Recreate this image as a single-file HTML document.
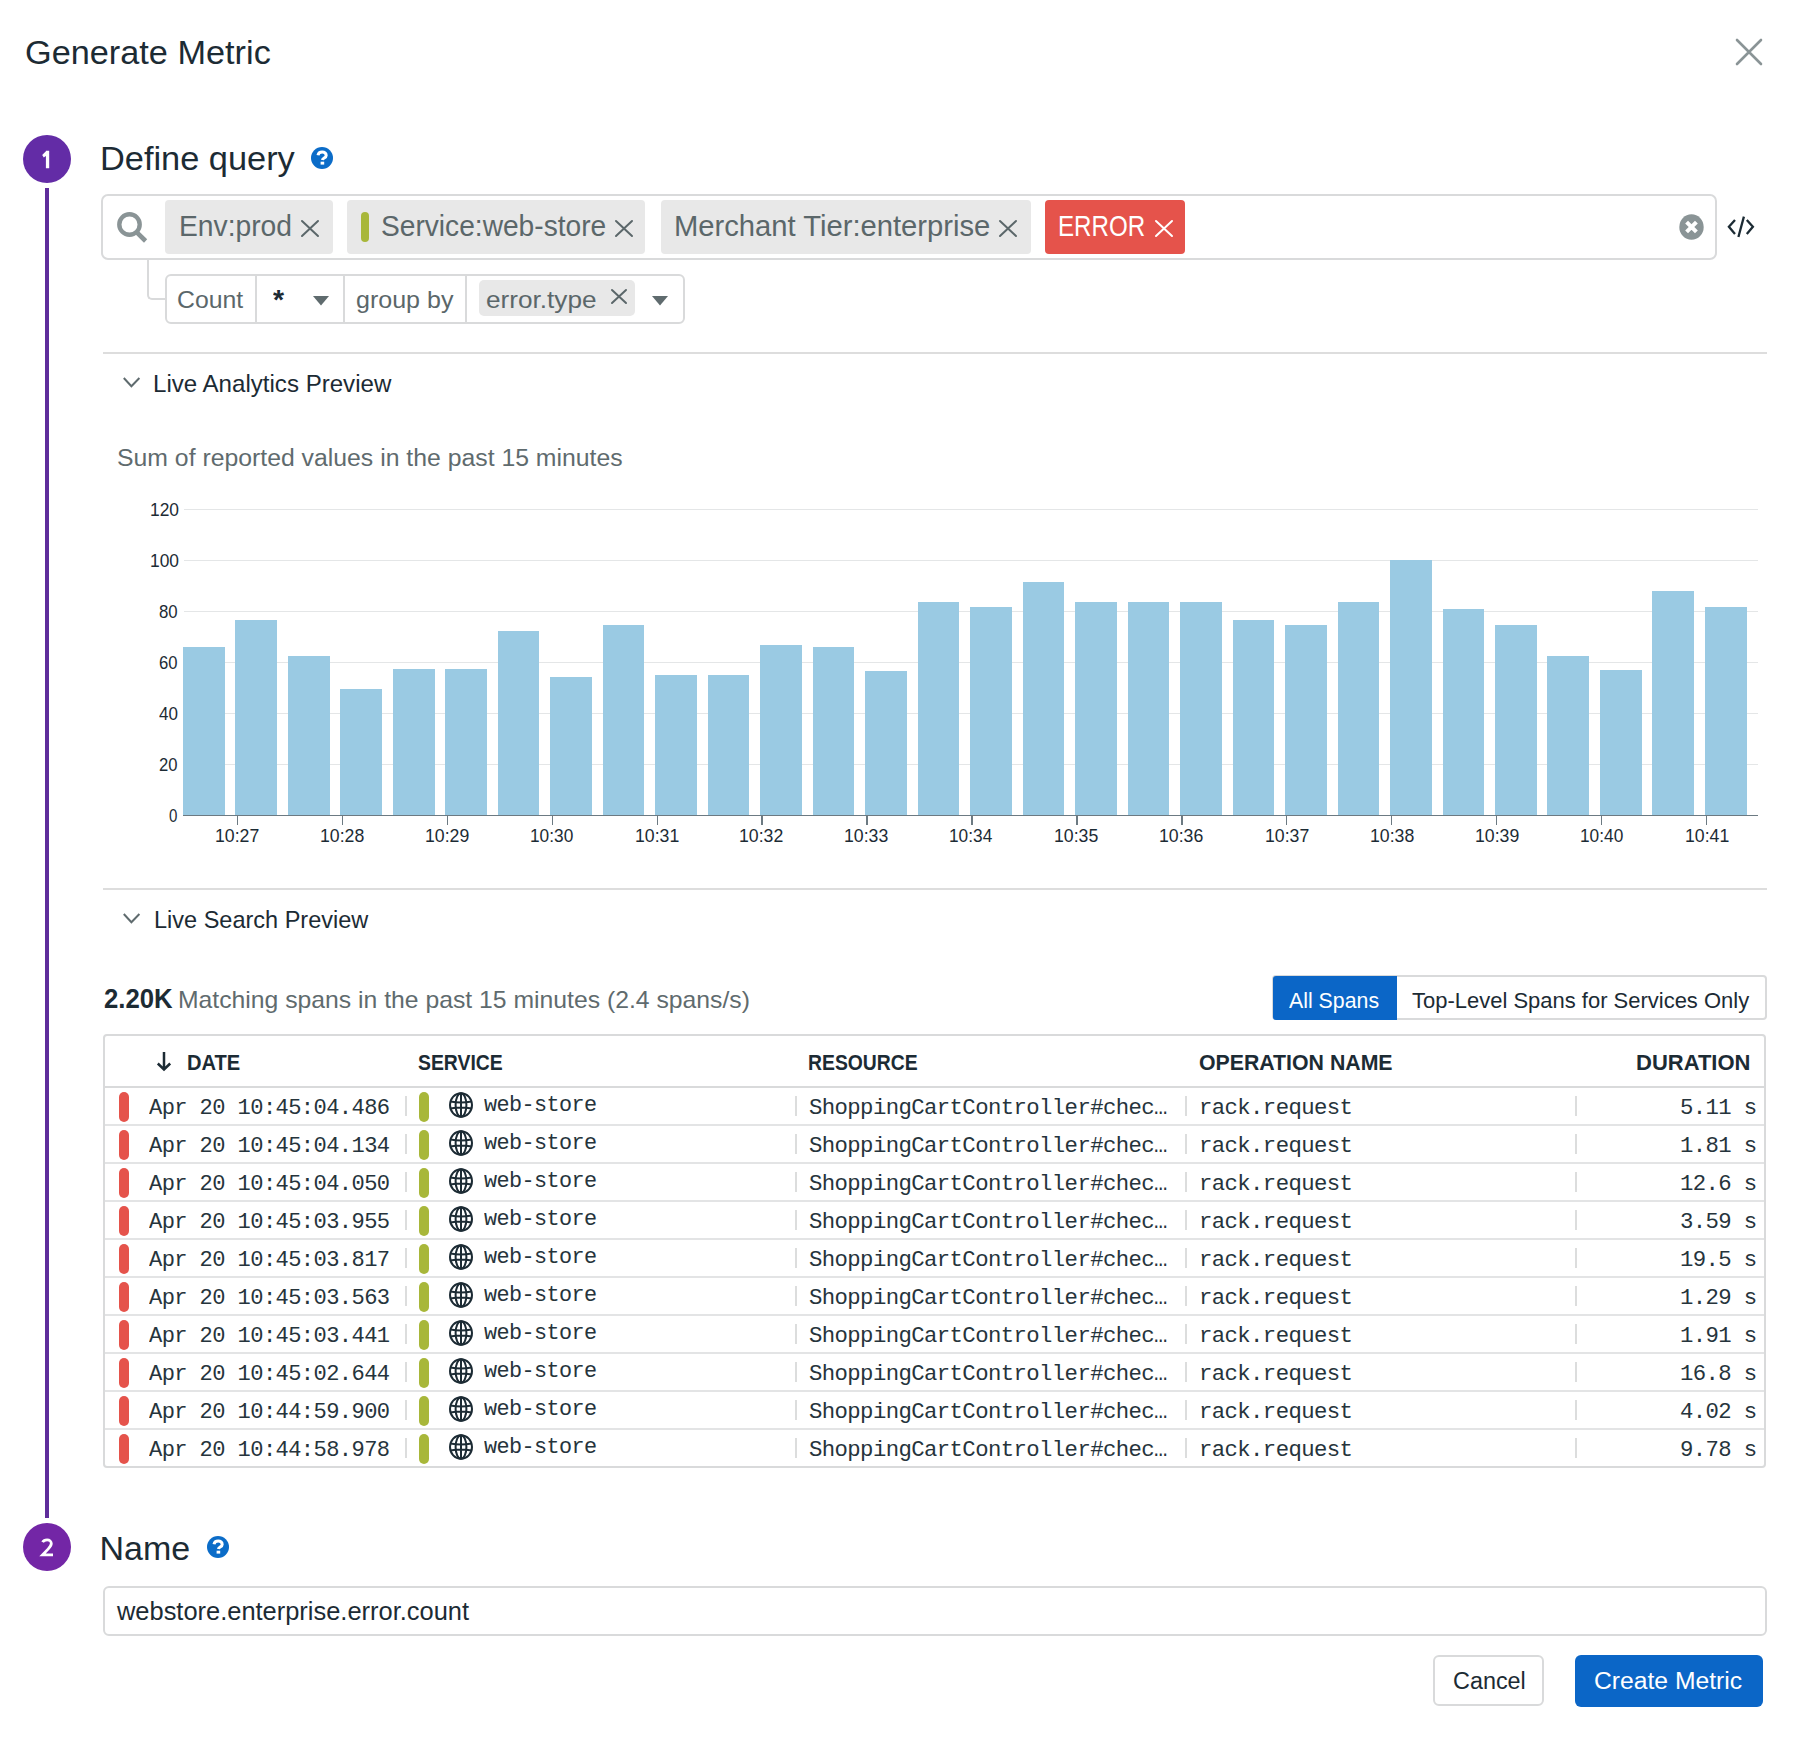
<!DOCTYPE html>
<html><head><meta charset="utf-8"><style>
html,body{margin:0;padding:0;background:#fff;}
body{width:1795px;height:1740px;position:relative;overflow:hidden;}
.a{position:absolute;}
.t{position:absolute;white-space:nowrap;line-height:1;}
.S{font-family:"Liberation Sans", sans-serif;}
.M{font-family:"Liberation Mono", monospace;}
.circ{background:#632ca6;border-radius:50%;color:#fff;font-family:"Liberation Sans", sans-serif;font-size:24px;font-weight:700;line-height:48px;text-align:center;}
svg{overflow:visible}
</style></head><body>
<div id="title" class="t S" style="left:24.80px;top:35.00px;font-size:34px;color:#1c2b34;font-weight:400;letter-spacing:0px;transform:scaleX(1.0083);transform-origin:0 0;">Generate Metric</div>
<svg class="a" style="left:1736px;top:39px" width="26" height="26" viewBox="0 0 26 26"><path d="M1 1L25 25M25 1L1 25" stroke="#8a9496" stroke-width="2.6" stroke-linecap="round" fill="none"/></svg>
<div class="a circ" style="left:23px;top:135px;width:48px;height:48px;"></div>
<svg class="a" style="left:0;top:0" width="80" height="200"><path d="M45.9 150.7H49.2V168.2H45.9Z M46.4 150.7L49.2 150.7L49.2 153.4L43.8 157.4L42.2 155.0Z" fill="#fff"/></svg>
<div class="a" style="left:45px;top:188px;width:4px;height:1330px;background:#5f2d9b"></div>
<div id="defq" class="t S" style="left:100.10px;top:141.00px;font-size:34px;color:#1c2b34;font-weight:400;letter-spacing:0px;transform:scaleX(1.0105);transform-origin:0 0;">Define query</div>
<svg class="a" style="left:310.8px;top:146.8px" width="22" height="22" viewBox="0 0 22 22"><circle cx="11" cy="11" r="11" fill="#0b6cc8"/><path d="M7.0 8.2C7.4 6.1 9.1 5.0 11.2 5.0C13.6 5.0 15.2 6.5 15.2 8.4C15.2 10.9 11.7 11.0 11.4 13.0" stroke="#fff" stroke-width="3" fill="none" stroke-linecap="butt"/><rect x="9.6" y="14.7" width="3.6" height="2.9" fill="#fff"/></svg>
<div class="a" style="left:101px;top:194px;width:1616px;height:66px;box-sizing:border-box;border:2px solid #d9dadb;border-radius:7px;background:#fff"></div>
<svg class="a" style="left:105px;top:200px" width="50" height="50" viewBox="0 0 50 50"><circle cx="24.5" cy="24.5" r="10.2" stroke="#8a9496" stroke-width="4.4" fill="none"/><path d="M31.3 31.8L40.6 41" stroke="#8a9496" stroke-width="4.6" stroke-linecap="butt"/></svg>
<div class="a" style="left:165px;top:200px;width:168px;height:54px;background:#e8e8e8;border-radius:4px"></div>
<div id="env" class="t S" style="left:179.00px;top:212.00px;font-size:29px;color:#5b676a;font-weight:400;letter-spacing:0px;transform:scaleX(0.9735);transform-origin:0 0;">Env:prod</div>
<svg class="a" style="left:301px;top:219.5px" width="18" height="17" viewBox="0 0 18 17"><path d="M1 1L17 16M17 1L1 16" stroke="#5b676a" stroke-width="2" stroke-linecap="round" fill="none"/></svg>
<div class="a" style="left:347px;top:200px;width:298px;height:54px;background:#e8e8e8;border-radius:4px"></div>
<div class="a" style="left:361px;top:212px;width:8px;height:30px;background:#a8b73a;border-radius:4px"></div>
<div id="svc" class="t S" style="left:380.50px;top:212.00px;font-size:29px;color:#5b676a;font-weight:400;letter-spacing:0px;transform:scaleX(0.9703);transform-origin:0 0;">Service:web-store</div>
<svg class="a" style="left:614.8px;top:219.5px" width="18" height="17" viewBox="0 0 18 17"><path d="M1 1L17 16M17 1L1 16" stroke="#5b676a" stroke-width="2" stroke-linecap="round" fill="none"/></svg>
<div class="a" style="left:661px;top:200px;width:370px;height:54px;background:#e8e8e8;border-radius:4px"></div>
<div id="merch" class="t S" style="left:674.00px;top:212.00px;font-size:29px;color:#5b676a;font-weight:400;letter-spacing:0px;transform:scaleX(1.0064);transform-origin:0 0;">Merchant Tier:enterprise</div>
<svg class="a" style="left:999px;top:219.5px" width="18" height="17" viewBox="0 0 18 17"><path d="M1 1L17 16M17 1L1 16" stroke="#5b676a" stroke-width="2" stroke-linecap="round" fill="none"/></svg>
<div class="a" style="left:1045px;top:200px;width:140px;height:54px;background:#e5534b;border-radius:4px"></div>
<div id="err" class="t S" style="left:1058.00px;top:212.00px;font-size:29px;color:#ffffff;font-weight:400;letter-spacing:0px;transform:scaleX(0.8317);transform-origin:0 0;">ERROR</div>
<svg class="a" style="left:1155px;top:219.5px" width="18" height="17" viewBox="0 0 18 17"><path d="M1 1L17 16M17 1L1 16" stroke="#ffffff" stroke-width="2" stroke-linecap="round" fill="none"/></svg>
<svg class="a" style="left:1678.5px;top:214px" width="25" height="26" viewBox="0 0 25 26"><ellipse cx="12.5" cy="13" rx="12.2" ry="12.8" fill="#8a9496"/><path d="M7.6 8.1L17.4 17.9M17.4 8.1L7.6 17.9" stroke="#fff" stroke-width="4.0" stroke-linecap="butt"/></svg>
<svg class="a" style="left:1720px;top:210px" width="40" height="34" viewBox="0 0 40 34"><path d="M15.0 9.9L8.9 16.8L15.0 23.9M26.8 9.9L32.9 16.8L26.8 23.9M23.9 6.6L18.4 27.0" stroke="#1c2b34" stroke-width="2.3" fill="none" stroke-linecap="butt" stroke-linejoin="miter"/></svg>
<div class="a" style="left:147px;top:259px;width:19px;height:41px;border-left:2px solid #d9dadb;border-bottom:2px solid #d9dadb;border-bottom-left-radius:5px;box-sizing:border-box"></div>
<div class="a" style="left:165px;top:274px;width:520px;height:50px;box-sizing:border-box;border:2px solid #d9dadb;border-radius:6px;background:#fff"></div>
<div class="a" style="left:255px;top:276px;width:2px;height:46px;background:#d9dadb"></div>
<div class="a" style="left:343px;top:276px;width:2px;height:46px;background:#d9dadb"></div>
<div class="a" style="left:465px;top:276px;width:2px;height:46px;background:#d9dadb"></div>
<div id="count" class="t S" style="left:177.00px;top:288.00px;font-size:24px;color:#5b676a;font-weight:400;letter-spacing:0px;transform:scaleX(1.0321);transform-origin:0 0;">Count</div>
<div id="star" class="t S" style="left:272.70px;top:286.00px;font-size:28px;color:#1c2b34;font-weight:700;letter-spacing:0px;transform:scaleX(1.0146);transform-origin:0 0;">*</div>
<svg class="a" style="left:313px;top:295.5px" width="16" height="10" viewBox="0 0 16 10"><path d="M0 0H16L8 9.5Z" fill="#5f6b6e"/></svg>
<div id="grp" class="t S" style="left:355.80px;top:288.00px;font-size:24px;color:#5b676a;font-weight:400;letter-spacing:0px;transform:scaleX(1.0431);transform-origin:0 0;">group by</div>
<div class="a" style="left:479px;top:280px;width:156px;height:36px;background:#e8e8e8;border-radius:5px"></div>
<div id="etype" class="t S" style="left:485.70px;top:288.00px;font-size:24px;color:#5b676a;font-weight:400;letter-spacing:0px;transform:scaleX(1.0901);transform-origin:0 0;">error.type</div>
<svg class="a" style="left:610.5px;top:289px" width="16" height="15" viewBox="0 0 16 15"><path d="M1 1L15 14M15 1L1 14" stroke="#5b676a" stroke-width="2" stroke-linecap="round" fill="none"/></svg>
<svg class="a" style="left:652px;top:295.5px" width="16" height="10" viewBox="0 0 16 10"><path d="M0 0H16L8 9.5Z" fill="#5f6b6e"/></svg>
<div class="a" style="left:103px;top:352px;width:1664px;height:2px;background:#dddddd"></div>
<svg class="a" style="left:123px;top:376.5px" width="18" height="11" viewBox="0 0 18 11"><path d="M0.8 1L8.4 9.2L16.4 1" stroke="#5f6b6e" stroke-width="2" fill="none"/></svg>
<div id="lap" class="t S" style="left:152.80px;top:372.00px;font-size:24.6px;color:#1c2b34;font-weight:400;letter-spacing:0px;transform:scaleX(0.9794);transform-origin:0 0;">Live Analytics Preview</div>
<div id="sum" class="t S" style="left:117.00px;top:446.00px;font-size:24.7px;color:#5f6b6e;font-weight:400;letter-spacing:0px;transform:scaleX(1.0040);transform-origin:0 0;">Sum of reported values in the past 15 minutes</div>
<div id="y0" class="t S" style="left:169.40px;top:807.00px;font-size:18.6px;color:#1c2b34;font-weight:400;letter-spacing:0px;transform:scaleX(0.8115);transform-origin:0 0;">0</div>
<div class="a" style="left:184px;top:763.8px;width:1574px;height:1.4px;background:#e4e6e7"></div>
<div id="y20" class="t S" style="left:159.40px;top:756.00px;font-size:18.6px;color:#1c2b34;font-weight:400;letter-spacing:0px;transform:scaleX(0.8933);transform-origin:0 0;">20</div>
<div class="a" style="left:184px;top:712.8px;width:1574px;height:1.4px;background:#e4e6e7"></div>
<div id="y40" class="t S" style="left:159.40px;top:705.00px;font-size:18.6px;color:#1c2b34;font-weight:400;letter-spacing:0px;transform:scaleX(0.9148);transform-origin:0 0;">40</div>
<div class="a" style="left:184px;top:661.8px;width:1574px;height:1.4px;background:#e4e6e7"></div>
<div id="y60" class="t S" style="left:159.40px;top:654.00px;font-size:18.6px;color:#1c2b34;font-weight:400;letter-spacing:0px;transform:scaleX(0.8933);transform-origin:0 0;">60</div>
<div class="a" style="left:184px;top:610.8px;width:1574px;height:1.4px;background:#e4e6e7"></div>
<div id="y80" class="t S" style="left:159.40px;top:603.00px;font-size:18.6px;color:#1c2b34;font-weight:400;letter-spacing:0px;transform:scaleX(0.9027);transform-origin:0 0;">80</div>
<div class="a" style="left:184px;top:559.8px;width:1574px;height:1.4px;background:#e4e6e7"></div>
<div id="y100" class="t S" style="left:149.50px;top:552.00px;font-size:18.6px;color:#1c2b34;font-weight:400;letter-spacing:0px;transform:scaleX(0.9348);transform-origin:0 0;">100</div>
<div class="a" style="left:184px;top:508.8px;width:1574px;height:1.4px;background:#e4e6e7"></div>
<div id="y120" class="t S" style="left:149.50px;top:501.00px;font-size:18.6px;color:#1c2b34;font-weight:400;letter-spacing:0px;transform:scaleX(0.9348);transform-origin:0 0;">120</div>
<div class="a" style="left:183.00px;top:647.0px;width:41.6px;height:168.0px;background:#9acae3"></div>
<div class="a" style="left:235.48px;top:619.8px;width:41.6px;height:195.2px;background:#9acae3"></div>
<div class="a" style="left:287.96px;top:655.9px;width:41.6px;height:159.1px;background:#9acae3"></div>
<div class="a" style="left:340.44px;top:689.1px;width:41.6px;height:125.9px;background:#9acae3"></div>
<div class="a" style="left:392.92px;top:669.2px;width:41.6px;height:145.8px;background:#9acae3"></div>
<div class="a" style="left:445.40px;top:669.2px;width:41.6px;height:145.8px;background:#9acae3"></div>
<div class="a" style="left:497.88px;top:630.7px;width:41.6px;height:184.3px;background:#9acae3"></div>
<div class="a" style="left:550.36px;top:676.6px;width:41.6px;height:138.4px;background:#9acae3"></div>
<div class="a" style="left:602.84px;top:625.1px;width:41.6px;height:189.9px;background:#9acae3"></div>
<div class="a" style="left:655.32px;top:674.8px;width:41.6px;height:140.2px;background:#9acae3"></div>
<div class="a" style="left:707.80px;top:674.8px;width:41.6px;height:140.2px;background:#9acae3"></div>
<div class="a" style="left:760.28px;top:645.0px;width:41.6px;height:170.0px;background:#9acae3"></div>
<div class="a" style="left:812.76px;top:647.0px;width:41.6px;height:168.0px;background:#9acae3"></div>
<div class="a" style="left:865.24px;top:671.3px;width:41.6px;height:143.7px;background:#9acae3"></div>
<div class="a" style="left:917.72px;top:602.0px;width:41.6px;height:213.0px;background:#9acae3"></div>
<div class="a" style="left:970.20px;top:607.1px;width:41.6px;height:207.9px;background:#9acae3"></div>
<div class="a" style="left:1022.68px;top:581.9px;width:41.6px;height:233.1px;background:#9acae3"></div>
<div class="a" style="left:1075.16px;top:602.0px;width:41.6px;height:213.0px;background:#9acae3"></div>
<div class="a" style="left:1127.64px;top:602.0px;width:41.6px;height:213.0px;background:#9acae3"></div>
<div class="a" style="left:1180.12px;top:602.0px;width:41.6px;height:213.0px;background:#9acae3"></div>
<div class="a" style="left:1232.60px;top:619.8px;width:41.6px;height:195.2px;background:#9acae3"></div>
<div class="a" style="left:1285.08px;top:625.1px;width:41.6px;height:189.9px;background:#9acae3"></div>
<div class="a" style="left:1337.56px;top:602.0px;width:41.6px;height:213.0px;background:#9acae3"></div>
<div class="a" style="left:1390.04px;top:560.3px;width:41.6px;height:254.7px;background:#9acae3"></div>
<div class="a" style="left:1442.52px;top:609.1px;width:41.6px;height:205.9px;background:#9acae3"></div>
<div class="a" style="left:1495.00px;top:625.4px;width:41.6px;height:189.6px;background:#9acae3"></div>
<div class="a" style="left:1547.48px;top:656.0px;width:41.6px;height:159.0px;background:#9acae3"></div>
<div class="a" style="left:1599.96px;top:669.5px;width:41.6px;height:145.5px;background:#9acae3"></div>
<div class="a" style="left:1652.44px;top:591.2px;width:41.6px;height:223.8px;background:#9acae3"></div>
<div class="a" style="left:1704.92px;top:607.2px;width:41.6px;height:207.8px;background:#9acae3"></div>
<div class="a" style="left:183px;top:814.5px;width:1575px;height:1.3px;background:#6c7a82"></div>
<div class="a" style="left:236.8px;top:815px;width:1.5px;height:9.5px;background:#6c7a82"></div>
<div id="x0" class="t S" style="left:215.40px;top:827.00px;font-size:18.5px;color:#1c2b34;font-weight:400;letter-spacing:0px;transform:scaleX(0.9562);transform-origin:0 0;">10:27</div>
<div class="a" style="left:341.8px;top:815px;width:1.5px;height:9.5px;background:#6c7a82"></div>
<div id="x1" class="t S" style="left:320.41px;top:827.00px;font-size:18.5px;color:#1c2b34;font-weight:400;letter-spacing:0px;transform:scaleX(0.9562);transform-origin:0 0;">10:28</div>
<div class="a" style="left:446.7px;top:815px;width:1.5px;height:9.5px;background:#6c7a82"></div>
<div id="x2" class="t S" style="left:425.42px;top:827.00px;font-size:18.5px;color:#1c2b34;font-weight:400;letter-spacing:0px;transform:scaleX(0.9562);transform-origin:0 0;">10:29</div>
<div class="a" style="left:551.6px;top:815px;width:1.5px;height:9.5px;background:#6c7a82"></div>
<div id="x3" class="t S" style="left:530.43px;top:827.00px;font-size:18.5px;color:#1c2b34;font-weight:400;letter-spacing:0px;transform:scaleX(0.9340);transform-origin:0 0;">10:30</div>
<div class="a" style="left:656.5px;top:815px;width:1.5px;height:9.5px;background:#6c7a82"></div>
<div id="x4" class="t S" style="left:635.44px;top:827.00px;font-size:18.5px;color:#1c2b34;font-weight:400;letter-spacing:0px;transform:scaleX(0.9562);transform-origin:0 0;">10:31</div>
<div class="a" style="left:761.4px;top:815px;width:1.5px;height:9.5px;background:#6c7a82"></div>
<div id="x5" class="t S" style="left:739.45px;top:827.00px;font-size:18.5px;color:#1c2b34;font-weight:400;letter-spacing:0px;transform:scaleX(0.9562);transform-origin:0 0;">10:32</div>
<div class="a" style="left:866.3px;top:815px;width:1.5px;height:9.5px;background:#6c7a82"></div>
<div id="x6" class="t S" style="left:844.46px;top:827.00px;font-size:18.5px;color:#1c2b34;font-weight:400;letter-spacing:0px;transform:scaleX(0.9562);transform-origin:0 0;">10:33</div>
<div class="a" style="left:971.2px;top:815px;width:1.5px;height:9.5px;background:#6c7a82"></div>
<div id="x7" class="t S" style="left:949.47px;top:827.00px;font-size:18.5px;color:#1c2b34;font-weight:400;letter-spacing:0px;transform:scaleX(0.9340);transform-origin:0 0;">10:34</div>
<div class="a" style="left:1076.1px;top:815px;width:1.5px;height:9.5px;background:#6c7a82"></div>
<div id="x8" class="t S" style="left:1054.48px;top:827.00px;font-size:18.5px;color:#1c2b34;font-weight:400;letter-spacing:0px;transform:scaleX(0.9562);transform-origin:0 0;">10:35</div>
<div class="a" style="left:1181.0px;top:815px;width:1.5px;height:9.5px;background:#6c7a82"></div>
<div id="x9" class="t S" style="left:1159.49px;top:827.00px;font-size:18.5px;color:#1c2b34;font-weight:400;letter-spacing:0px;transform:scaleX(0.9562);transform-origin:0 0;">10:36</div>
<div class="a" style="left:1285.9px;top:815px;width:1.5px;height:9.5px;background:#6c7a82"></div>
<div id="x10" class="t S" style="left:1264.50px;top:827.00px;font-size:18.5px;color:#1c2b34;font-weight:400;letter-spacing:0px;transform:scaleX(0.9562);transform-origin:0 0;">10:37</div>
<div class="a" style="left:1390.9px;top:815px;width:1.5px;height:9.5px;background:#6c7a82"></div>
<div id="x11" class="t S" style="left:1369.51px;top:827.00px;font-size:18.5px;color:#1c2b34;font-weight:400;letter-spacing:0px;transform:scaleX(0.9562);transform-origin:0 0;">10:38</div>
<div class="a" style="left:1495.8px;top:815px;width:1.5px;height:9.5px;background:#6c7a82"></div>
<div id="x12" class="t S" style="left:1474.52px;top:827.00px;font-size:18.5px;color:#1c2b34;font-weight:400;letter-spacing:0px;transform:scaleX(0.9562);transform-origin:0 0;">10:39</div>
<div class="a" style="left:1600.7px;top:815px;width:1.5px;height:9.5px;background:#6c7a82"></div>
<div id="x13" class="t S" style="left:1579.53px;top:827.00px;font-size:18.5px;color:#1c2b34;font-weight:400;letter-spacing:0px;transform:scaleX(0.9340);transform-origin:0 0;">10:40</div>
<div class="a" style="left:1705.6px;top:815px;width:1.5px;height:9.5px;background:#6c7a82"></div>
<div id="x14" class="t S" style="left:1684.54px;top:827.00px;font-size:18.5px;color:#1c2b34;font-weight:400;letter-spacing:0px;transform:scaleX(0.9562);transform-origin:0 0;">10:41</div>
<div class="a" style="left:103px;top:888px;width:1664px;height:2px;background:#dddddd"></div>
<svg class="a" style="left:123px;top:912.5px" width="18" height="11" viewBox="0 0 18 11"><path d="M0.8 1L8.4 9.2L16.4 1" stroke="#5f6b6e" stroke-width="2" fill="none"/></svg>
<div id="lsp" class="t S" style="left:153.80px;top:908.00px;font-size:24.4px;color:#1c2b34;font-weight:400;letter-spacing:0px;transform:scaleX(0.9638);transform-origin:0 0;">Live Search Preview</div>
<div id="k" class="t S" style="left:103.80px;top:985.00px;font-size:28px;color:#1c2b34;font-weight:700;letter-spacing:0px;transform:scaleX(0.9192);transform-origin:0 0;">2.20K</div>
<div id="match" class="t S" style="left:178.20px;top:988.00px;font-size:24px;color:#5f6b6e;font-weight:400;letter-spacing:0px;transform:scaleX(1.0306);transform-origin:0 0;">Matching spans in the past 15 minutes (2.4 spans/s)</div>
<div class="a" style="left:1272px;top:975px;width:495px;height:45px;box-sizing:border-box;border:2px solid #d9dadb;border-radius:4px;background:#fff"></div>
<div class="a" style="left:1273px;top:976px;width:124px;height:43.5px;background:#0b66c7;border-radius:3px 0 0 3px"></div>
<div id="all" class="t S" style="left:1289.20px;top:990.00px;font-size:22.5px;color:#ffffff;font-weight:400;letter-spacing:0px;transform:scaleX(0.9474);transform-origin:0 0;">All Spans</div>
<div id="top" class="t S" style="left:1412.10px;top:990.00px;font-size:22.5px;color:#1c2b34;font-weight:400;letter-spacing:0px;transform:scaleX(0.9768);transform-origin:0 0;">Top-Level Spans for Services Only</div>
<div class="a" style="left:103px;top:1034px;width:1663px;height:434px;box-sizing:border-box;border:2px solid #d9dadb;border-radius:4px;background:#fff"></div>
<div class="a" style="left:105px;top:1086px;width:1659px;height:2px;background:#d9dadb"></div>
<svg class="a" style="left:156px;top:1051px" width="16" height="20" viewBox="0 0 16 20"><path d="M8 1V18.5M1.8 12.5L8 18.5L14.2 12.5" stroke="#1c2b34" stroke-width="2.5" fill="none"/></svg>
<div id="h_date" class="t S" style="left:186.60px;top:1052.00px;font-size:22.4px;color:#1c2b34;font-weight:700;letter-spacing:0px;transform:scaleX(0.8970);transform-origin:0 0;">DATE</div>
<div id="h_svc" class="t S" style="left:417.50px;top:1052.00px;font-size:22.4px;color:#1c2b34;font-weight:700;letter-spacing:0px;transform:scaleX(0.8661);transform-origin:0 0;">SERVICE</div>
<div id="h_res" class="t S" style="left:807.50px;top:1052.00px;font-size:22.4px;color:#1c2b34;font-weight:700;letter-spacing:0px;transform:scaleX(0.8641);transform-origin:0 0;">RESOURCE</div>
<div id="h_op" class="t S" style="left:1198.50px;top:1052.00px;font-size:22.4px;color:#1c2b34;font-weight:700;letter-spacing:0px;transform:scaleX(0.9507);transform-origin:0 0;">OPERATION NAME</div>
<div id="h_dur" class="t S" style="left:1635.90px;top:1052.00px;font-size:22.4px;color:#1c2b34;font-weight:700;letter-spacing:0px;transform:scaleX(0.9826);transform-origin:0 0;">DURATION</div>
<div class="a" style="left:105px;top:1124px;width:1659px;height:2px;background:#e3e4e5"></div>
<div class="a" style="left:119px;top:1092px;width:10px;height:30px;background:#e5534b;border-radius:5px"></div>
<div id="r0d" class="t M" style="left:149.00px;top:1098.00px;font-size:22px;color:#26343c;font-weight:400;letter-spacing:-0.6px;transform:scaleX(1.0042);transform-origin:0 0;">Apr 20 10:45:04.486</div>
<div class="a" style="left:405px;top:1096px;width:1.5px;height:20px;background:#dcdddd"></div>
<div class="a" style="left:419px;top:1092px;width:10px;height:29.5px;background:#a8b73a;border-radius:5px"></div>
<svg class="a" style="left:448px;top:1092px" width="26" height="26" viewBox="0 0 26 26"><g stroke="#1c2b34" stroke-width="2" fill="none"><ellipse cx="13" cy="13" rx="11" ry="11.8"/><ellipse cx="13" cy="13" rx="5.4" ry="11.8"/><path d="M13 1.2V24.8M2.5 9.6Q13 11.6 23.5 9.6M2.5 16.6Q13 14.6 23.5 16.6"/></g></svg>
<div id="r0s" class="t M" style="left:483.60px;top:1095.00px;font-size:22px;color:#26343c;font-weight:400;letter-spacing:-0.6px;transform:scaleX(0.9913);transform-origin:0 0;">web-store</div>
<div class="a" style="left:795px;top:1096px;width:1.5px;height:20px;background:#dcdddd"></div>
<div id="r0r" class="t M" style="left:809.40px;top:1098.00px;font-size:22px;color:#26343c;font-weight:400;letter-spacing:-0.6px;transform:scaleX(1.0142);transform-origin:0 0;">ShoppingCartController#chec…</div>
<div class="a" style="left:1185px;top:1096px;width:1.5px;height:20px;background:#dcdddd"></div>
<div id="r0o" class="t M" style="left:1199.00px;top:1098.00px;font-size:22px;color:#26343c;font-weight:400;letter-spacing:-0.6px;transform:scaleX(1.0135);transform-origin:0 0;">rack.request</div>
<div class="a" style="left:1575px;top:1096px;width:1.5px;height:20px;background:#dcdddd"></div>
<div id="r0u" class="t M" style="left:1679.70px;top:1098.00px;font-size:22px;color:#26343c;font-weight:400;letter-spacing:-0.6px;transform:scaleX(1.0137);transform-origin:0 0;">5.11 s</div>
<div class="a" style="left:105px;top:1162px;width:1659px;height:2px;background:#e3e4e5"></div>
<div class="a" style="left:119px;top:1130px;width:10px;height:30px;background:#e5534b;border-radius:5px"></div>
<div id="r1d" class="t M" style="left:149.00px;top:1136.00px;font-size:22px;color:#26343c;font-weight:400;letter-spacing:-0.6px;transform:scaleX(1.0042);transform-origin:0 0;">Apr 20 10:45:04.134</div>
<div class="a" style="left:405px;top:1134px;width:1.5px;height:20px;background:#dcdddd"></div>
<div class="a" style="left:419px;top:1130px;width:10px;height:29.5px;background:#a8b73a;border-radius:5px"></div>
<svg class="a" style="left:448px;top:1130px" width="26" height="26" viewBox="0 0 26 26"><g stroke="#1c2b34" stroke-width="2" fill="none"><ellipse cx="13" cy="13" rx="11" ry="11.8"/><ellipse cx="13" cy="13" rx="5.4" ry="11.8"/><path d="M13 1.2V24.8M2.5 9.6Q13 11.6 23.5 9.6M2.5 16.6Q13 14.6 23.5 16.6"/></g></svg>
<div id="r1s" class="t M" style="left:483.60px;top:1133.00px;font-size:22px;color:#26343c;font-weight:400;letter-spacing:-0.6px;transform:scaleX(0.9913);transform-origin:0 0;">web-store</div>
<div class="a" style="left:795px;top:1134px;width:1.5px;height:20px;background:#dcdddd"></div>
<div id="r1r" class="t M" style="left:809.40px;top:1136.00px;font-size:22px;color:#26343c;font-weight:400;letter-spacing:-0.6px;transform:scaleX(1.0142);transform-origin:0 0;">ShoppingCartController#chec…</div>
<div class="a" style="left:1185px;top:1134px;width:1.5px;height:20px;background:#dcdddd"></div>
<div id="r1o" class="t M" style="left:1199.00px;top:1136.00px;font-size:22px;color:#26343c;font-weight:400;letter-spacing:-0.6px;transform:scaleX(1.0135);transform-origin:0 0;">rack.request</div>
<div class="a" style="left:1575px;top:1134px;width:1.5px;height:20px;background:#dcdddd"></div>
<div id="r1u" class="t M" style="left:1679.70px;top:1136.00px;font-size:22px;color:#26343c;font-weight:400;letter-spacing:-0.6px;transform:scaleX(1.0137);transform-origin:0 0;">1.81 s</div>
<div class="a" style="left:105px;top:1200px;width:1659px;height:2px;background:#e3e4e5"></div>
<div class="a" style="left:119px;top:1168px;width:10px;height:30px;background:#e5534b;border-radius:5px"></div>
<div id="r2d" class="t M" style="left:149.00px;top:1174.00px;font-size:22px;color:#26343c;font-weight:400;letter-spacing:-0.6px;transform:scaleX(1.0042);transform-origin:0 0;">Apr 20 10:45:04.050</div>
<div class="a" style="left:405px;top:1172px;width:1.5px;height:20px;background:#dcdddd"></div>
<div class="a" style="left:419px;top:1168px;width:10px;height:29.5px;background:#a8b73a;border-radius:5px"></div>
<svg class="a" style="left:448px;top:1168px" width="26" height="26" viewBox="0 0 26 26"><g stroke="#1c2b34" stroke-width="2" fill="none"><ellipse cx="13" cy="13" rx="11" ry="11.8"/><ellipse cx="13" cy="13" rx="5.4" ry="11.8"/><path d="M13 1.2V24.8M2.5 9.6Q13 11.6 23.5 9.6M2.5 16.6Q13 14.6 23.5 16.6"/></g></svg>
<div id="r2s" class="t M" style="left:483.60px;top:1171.00px;font-size:22px;color:#26343c;font-weight:400;letter-spacing:-0.6px;transform:scaleX(0.9913);transform-origin:0 0;">web-store</div>
<div class="a" style="left:795px;top:1172px;width:1.5px;height:20px;background:#dcdddd"></div>
<div id="r2r" class="t M" style="left:809.40px;top:1174.00px;font-size:22px;color:#26343c;font-weight:400;letter-spacing:-0.6px;transform:scaleX(1.0142);transform-origin:0 0;">ShoppingCartController#chec…</div>
<div class="a" style="left:1185px;top:1172px;width:1.5px;height:20px;background:#dcdddd"></div>
<div id="r2o" class="t M" style="left:1199.00px;top:1174.00px;font-size:22px;color:#26343c;font-weight:400;letter-spacing:-0.6px;transform:scaleX(1.0135);transform-origin:0 0;">rack.request</div>
<div class="a" style="left:1575px;top:1172px;width:1.5px;height:20px;background:#dcdddd"></div>
<div id="r2u" class="t M" style="left:1679.70px;top:1174.00px;font-size:22px;color:#26343c;font-weight:400;letter-spacing:-0.6px;transform:scaleX(1.0137);transform-origin:0 0;">12.6 s</div>
<div class="a" style="left:105px;top:1238px;width:1659px;height:2px;background:#e3e4e5"></div>
<div class="a" style="left:119px;top:1206px;width:10px;height:30px;background:#e5534b;border-radius:5px"></div>
<div id="r3d" class="t M" style="left:149.00px;top:1212.00px;font-size:22px;color:#26343c;font-weight:400;letter-spacing:-0.6px;transform:scaleX(1.0042);transform-origin:0 0;">Apr 20 10:45:03.955</div>
<div class="a" style="left:405px;top:1210px;width:1.5px;height:20px;background:#dcdddd"></div>
<div class="a" style="left:419px;top:1206px;width:10px;height:29.5px;background:#a8b73a;border-radius:5px"></div>
<svg class="a" style="left:448px;top:1206px" width="26" height="26" viewBox="0 0 26 26"><g stroke="#1c2b34" stroke-width="2" fill="none"><ellipse cx="13" cy="13" rx="11" ry="11.8"/><ellipse cx="13" cy="13" rx="5.4" ry="11.8"/><path d="M13 1.2V24.8M2.5 9.6Q13 11.6 23.5 9.6M2.5 16.6Q13 14.6 23.5 16.6"/></g></svg>
<div id="r3s" class="t M" style="left:483.60px;top:1209.00px;font-size:22px;color:#26343c;font-weight:400;letter-spacing:-0.6px;transform:scaleX(0.9913);transform-origin:0 0;">web-store</div>
<div class="a" style="left:795px;top:1210px;width:1.5px;height:20px;background:#dcdddd"></div>
<div id="r3r" class="t M" style="left:809.40px;top:1212.00px;font-size:22px;color:#26343c;font-weight:400;letter-spacing:-0.6px;transform:scaleX(1.0142);transform-origin:0 0;">ShoppingCartController#chec…</div>
<div class="a" style="left:1185px;top:1210px;width:1.5px;height:20px;background:#dcdddd"></div>
<div id="r3o" class="t M" style="left:1199.00px;top:1212.00px;font-size:22px;color:#26343c;font-weight:400;letter-spacing:-0.6px;transform:scaleX(1.0135);transform-origin:0 0;">rack.request</div>
<div class="a" style="left:1575px;top:1210px;width:1.5px;height:20px;background:#dcdddd"></div>
<div id="r3u" class="t M" style="left:1679.70px;top:1212.00px;font-size:22px;color:#26343c;font-weight:400;letter-spacing:-0.6px;transform:scaleX(1.0137);transform-origin:0 0;">3.59 s</div>
<div class="a" style="left:105px;top:1276px;width:1659px;height:2px;background:#e3e4e5"></div>
<div class="a" style="left:119px;top:1244px;width:10px;height:30px;background:#e5534b;border-radius:5px"></div>
<div id="r4d" class="t M" style="left:149.00px;top:1250.00px;font-size:22px;color:#26343c;font-weight:400;letter-spacing:-0.6px;transform:scaleX(1.0042);transform-origin:0 0;">Apr 20 10:45:03.817</div>
<div class="a" style="left:405px;top:1248px;width:1.5px;height:20px;background:#dcdddd"></div>
<div class="a" style="left:419px;top:1244px;width:10px;height:29.5px;background:#a8b73a;border-radius:5px"></div>
<svg class="a" style="left:448px;top:1244px" width="26" height="26" viewBox="0 0 26 26"><g stroke="#1c2b34" stroke-width="2" fill="none"><ellipse cx="13" cy="13" rx="11" ry="11.8"/><ellipse cx="13" cy="13" rx="5.4" ry="11.8"/><path d="M13 1.2V24.8M2.5 9.6Q13 11.6 23.5 9.6M2.5 16.6Q13 14.6 23.5 16.6"/></g></svg>
<div id="r4s" class="t M" style="left:483.60px;top:1247.00px;font-size:22px;color:#26343c;font-weight:400;letter-spacing:-0.6px;transform:scaleX(0.9913);transform-origin:0 0;">web-store</div>
<div class="a" style="left:795px;top:1248px;width:1.5px;height:20px;background:#dcdddd"></div>
<div id="r4r" class="t M" style="left:809.40px;top:1250.00px;font-size:22px;color:#26343c;font-weight:400;letter-spacing:-0.6px;transform:scaleX(1.0142);transform-origin:0 0;">ShoppingCartController#chec…</div>
<div class="a" style="left:1185px;top:1248px;width:1.5px;height:20px;background:#dcdddd"></div>
<div id="r4o" class="t M" style="left:1199.00px;top:1250.00px;font-size:22px;color:#26343c;font-weight:400;letter-spacing:-0.6px;transform:scaleX(1.0135);transform-origin:0 0;">rack.request</div>
<div class="a" style="left:1575px;top:1248px;width:1.5px;height:20px;background:#dcdddd"></div>
<div id="r4u" class="t M" style="left:1679.70px;top:1250.00px;font-size:22px;color:#26343c;font-weight:400;letter-spacing:-0.6px;transform:scaleX(1.0137);transform-origin:0 0;">19.5 s</div>
<div class="a" style="left:105px;top:1314px;width:1659px;height:2px;background:#e3e4e5"></div>
<div class="a" style="left:119px;top:1282px;width:10px;height:30px;background:#e5534b;border-radius:5px"></div>
<div id="r5d" class="t M" style="left:149.00px;top:1288.00px;font-size:22px;color:#26343c;font-weight:400;letter-spacing:-0.6px;transform:scaleX(1.0042);transform-origin:0 0;">Apr 20 10:45:03.563</div>
<div class="a" style="left:405px;top:1286px;width:1.5px;height:20px;background:#dcdddd"></div>
<div class="a" style="left:419px;top:1282px;width:10px;height:29.5px;background:#a8b73a;border-radius:5px"></div>
<svg class="a" style="left:448px;top:1282px" width="26" height="26" viewBox="0 0 26 26"><g stroke="#1c2b34" stroke-width="2" fill="none"><ellipse cx="13" cy="13" rx="11" ry="11.8"/><ellipse cx="13" cy="13" rx="5.4" ry="11.8"/><path d="M13 1.2V24.8M2.5 9.6Q13 11.6 23.5 9.6M2.5 16.6Q13 14.6 23.5 16.6"/></g></svg>
<div id="r5s" class="t M" style="left:483.60px;top:1285.00px;font-size:22px;color:#26343c;font-weight:400;letter-spacing:-0.6px;transform:scaleX(0.9913);transform-origin:0 0;">web-store</div>
<div class="a" style="left:795px;top:1286px;width:1.5px;height:20px;background:#dcdddd"></div>
<div id="r5r" class="t M" style="left:809.40px;top:1288.00px;font-size:22px;color:#26343c;font-weight:400;letter-spacing:-0.6px;transform:scaleX(1.0142);transform-origin:0 0;">ShoppingCartController#chec…</div>
<div class="a" style="left:1185px;top:1286px;width:1.5px;height:20px;background:#dcdddd"></div>
<div id="r5o" class="t M" style="left:1199.00px;top:1288.00px;font-size:22px;color:#26343c;font-weight:400;letter-spacing:-0.6px;transform:scaleX(1.0135);transform-origin:0 0;">rack.request</div>
<div class="a" style="left:1575px;top:1286px;width:1.5px;height:20px;background:#dcdddd"></div>
<div id="r5u" class="t M" style="left:1679.70px;top:1288.00px;font-size:22px;color:#26343c;font-weight:400;letter-spacing:-0.6px;transform:scaleX(1.0137);transform-origin:0 0;">1.29 s</div>
<div class="a" style="left:105px;top:1352px;width:1659px;height:2px;background:#e3e4e5"></div>
<div class="a" style="left:119px;top:1320px;width:10px;height:30px;background:#e5534b;border-radius:5px"></div>
<div id="r6d" class="t M" style="left:149.00px;top:1326.00px;font-size:22px;color:#26343c;font-weight:400;letter-spacing:-0.6px;transform:scaleX(1.0042);transform-origin:0 0;">Apr 20 10:45:03.441</div>
<div class="a" style="left:405px;top:1324px;width:1.5px;height:20px;background:#dcdddd"></div>
<div class="a" style="left:419px;top:1320px;width:10px;height:29.5px;background:#a8b73a;border-radius:5px"></div>
<svg class="a" style="left:448px;top:1320px" width="26" height="26" viewBox="0 0 26 26"><g stroke="#1c2b34" stroke-width="2" fill="none"><ellipse cx="13" cy="13" rx="11" ry="11.8"/><ellipse cx="13" cy="13" rx="5.4" ry="11.8"/><path d="M13 1.2V24.8M2.5 9.6Q13 11.6 23.5 9.6M2.5 16.6Q13 14.6 23.5 16.6"/></g></svg>
<div id="r6s" class="t M" style="left:483.60px;top:1323.00px;font-size:22px;color:#26343c;font-weight:400;letter-spacing:-0.6px;transform:scaleX(0.9913);transform-origin:0 0;">web-store</div>
<div class="a" style="left:795px;top:1324px;width:1.5px;height:20px;background:#dcdddd"></div>
<div id="r6r" class="t M" style="left:809.40px;top:1326.00px;font-size:22px;color:#26343c;font-weight:400;letter-spacing:-0.6px;transform:scaleX(1.0142);transform-origin:0 0;">ShoppingCartController#chec…</div>
<div class="a" style="left:1185px;top:1324px;width:1.5px;height:20px;background:#dcdddd"></div>
<div id="r6o" class="t M" style="left:1199.00px;top:1326.00px;font-size:22px;color:#26343c;font-weight:400;letter-spacing:-0.6px;transform:scaleX(1.0135);transform-origin:0 0;">rack.request</div>
<div class="a" style="left:1575px;top:1324px;width:1.5px;height:20px;background:#dcdddd"></div>
<div id="r6u" class="t M" style="left:1679.70px;top:1326.00px;font-size:22px;color:#26343c;font-weight:400;letter-spacing:-0.6px;transform:scaleX(1.0137);transform-origin:0 0;">1.91 s</div>
<div class="a" style="left:105px;top:1390px;width:1659px;height:2px;background:#e3e4e5"></div>
<div class="a" style="left:119px;top:1358px;width:10px;height:30px;background:#e5534b;border-radius:5px"></div>
<div id="r7d" class="t M" style="left:149.00px;top:1364.00px;font-size:22px;color:#26343c;font-weight:400;letter-spacing:-0.6px;transform:scaleX(1.0042);transform-origin:0 0;">Apr 20 10:45:02.644</div>
<div class="a" style="left:405px;top:1362px;width:1.5px;height:20px;background:#dcdddd"></div>
<div class="a" style="left:419px;top:1358px;width:10px;height:29.5px;background:#a8b73a;border-radius:5px"></div>
<svg class="a" style="left:448px;top:1358px" width="26" height="26" viewBox="0 0 26 26"><g stroke="#1c2b34" stroke-width="2" fill="none"><ellipse cx="13" cy="13" rx="11" ry="11.8"/><ellipse cx="13" cy="13" rx="5.4" ry="11.8"/><path d="M13 1.2V24.8M2.5 9.6Q13 11.6 23.5 9.6M2.5 16.6Q13 14.6 23.5 16.6"/></g></svg>
<div id="r7s" class="t M" style="left:483.60px;top:1361.00px;font-size:22px;color:#26343c;font-weight:400;letter-spacing:-0.6px;transform:scaleX(0.9913);transform-origin:0 0;">web-store</div>
<div class="a" style="left:795px;top:1362px;width:1.5px;height:20px;background:#dcdddd"></div>
<div id="r7r" class="t M" style="left:809.40px;top:1364.00px;font-size:22px;color:#26343c;font-weight:400;letter-spacing:-0.6px;transform:scaleX(1.0142);transform-origin:0 0;">ShoppingCartController#chec…</div>
<div class="a" style="left:1185px;top:1362px;width:1.5px;height:20px;background:#dcdddd"></div>
<div id="r7o" class="t M" style="left:1199.00px;top:1364.00px;font-size:22px;color:#26343c;font-weight:400;letter-spacing:-0.6px;transform:scaleX(1.0135);transform-origin:0 0;">rack.request</div>
<div class="a" style="left:1575px;top:1362px;width:1.5px;height:20px;background:#dcdddd"></div>
<div id="r7u" class="t M" style="left:1679.70px;top:1364.00px;font-size:22px;color:#26343c;font-weight:400;letter-spacing:-0.6px;transform:scaleX(1.0137);transform-origin:0 0;">16.8 s</div>
<div class="a" style="left:105px;top:1428px;width:1659px;height:2px;background:#e3e4e5"></div>
<div class="a" style="left:119px;top:1396px;width:10px;height:30px;background:#e5534b;border-radius:5px"></div>
<div id="r8d" class="t M" style="left:149.00px;top:1402.00px;font-size:22px;color:#26343c;font-weight:400;letter-spacing:-0.6px;transform:scaleX(1.0042);transform-origin:0 0;">Apr 20 10:44:59.900</div>
<div class="a" style="left:405px;top:1400px;width:1.5px;height:20px;background:#dcdddd"></div>
<div class="a" style="left:419px;top:1396px;width:10px;height:29.5px;background:#a8b73a;border-radius:5px"></div>
<svg class="a" style="left:448px;top:1396px" width="26" height="26" viewBox="0 0 26 26"><g stroke="#1c2b34" stroke-width="2" fill="none"><ellipse cx="13" cy="13" rx="11" ry="11.8"/><ellipse cx="13" cy="13" rx="5.4" ry="11.8"/><path d="M13 1.2V24.8M2.5 9.6Q13 11.6 23.5 9.6M2.5 16.6Q13 14.6 23.5 16.6"/></g></svg>
<div id="r8s" class="t M" style="left:483.60px;top:1399.00px;font-size:22px;color:#26343c;font-weight:400;letter-spacing:-0.6px;transform:scaleX(0.9913);transform-origin:0 0;">web-store</div>
<div class="a" style="left:795px;top:1400px;width:1.5px;height:20px;background:#dcdddd"></div>
<div id="r8r" class="t M" style="left:809.40px;top:1402.00px;font-size:22px;color:#26343c;font-weight:400;letter-spacing:-0.6px;transform:scaleX(1.0142);transform-origin:0 0;">ShoppingCartController#chec…</div>
<div class="a" style="left:1185px;top:1400px;width:1.5px;height:20px;background:#dcdddd"></div>
<div id="r8o" class="t M" style="left:1199.00px;top:1402.00px;font-size:22px;color:#26343c;font-weight:400;letter-spacing:-0.6px;transform:scaleX(1.0135);transform-origin:0 0;">rack.request</div>
<div class="a" style="left:1575px;top:1400px;width:1.5px;height:20px;background:#dcdddd"></div>
<div id="r8u" class="t M" style="left:1679.70px;top:1402.00px;font-size:22px;color:#26343c;font-weight:400;letter-spacing:-0.6px;transform:scaleX(1.0137);transform-origin:0 0;">4.02 s</div>
<div class="a" style="left:119px;top:1434px;width:10px;height:30px;background:#e5534b;border-radius:5px"></div>
<div id="r9d" class="t M" style="left:149.00px;top:1440.00px;font-size:22px;color:#26343c;font-weight:400;letter-spacing:-0.6px;transform:scaleX(1.0042);transform-origin:0 0;">Apr 20 10:44:58.978</div>
<div class="a" style="left:405px;top:1438px;width:1.5px;height:20px;background:#dcdddd"></div>
<div class="a" style="left:419px;top:1434px;width:10px;height:29.5px;background:#a8b73a;border-radius:5px"></div>
<svg class="a" style="left:448px;top:1434px" width="26" height="26" viewBox="0 0 26 26"><g stroke="#1c2b34" stroke-width="2" fill="none"><ellipse cx="13" cy="13" rx="11" ry="11.8"/><ellipse cx="13" cy="13" rx="5.4" ry="11.8"/><path d="M13 1.2V24.8M2.5 9.6Q13 11.6 23.5 9.6M2.5 16.6Q13 14.6 23.5 16.6"/></g></svg>
<div id="r9s" class="t M" style="left:483.60px;top:1437.00px;font-size:22px;color:#26343c;font-weight:400;letter-spacing:-0.6px;transform:scaleX(0.9913);transform-origin:0 0;">web-store</div>
<div class="a" style="left:795px;top:1438px;width:1.5px;height:20px;background:#dcdddd"></div>
<div id="r9r" class="t M" style="left:809.40px;top:1440.00px;font-size:22px;color:#26343c;font-weight:400;letter-spacing:-0.6px;transform:scaleX(1.0142);transform-origin:0 0;">ShoppingCartController#chec…</div>
<div class="a" style="left:1185px;top:1438px;width:1.5px;height:20px;background:#dcdddd"></div>
<div id="r9o" class="t M" style="left:1199.00px;top:1440.00px;font-size:22px;color:#26343c;font-weight:400;letter-spacing:-0.6px;transform:scaleX(1.0135);transform-origin:0 0;">rack.request</div>
<div class="a" style="left:1575px;top:1438px;width:1.5px;height:20px;background:#dcdddd"></div>
<div id="r9u" class="t M" style="left:1679.70px;top:1440.00px;font-size:22px;color:#26343c;font-weight:400;letter-spacing:-0.6px;transform:scaleX(1.0137);transform-origin:0 0;">9.78 s</div>
<div class="a circ" style="left:23px;top:1523px;width:48px;height:48px;background:#7326a6"></div>
<svg class="a" style="left:0;top:1500px" width="80" height="80"><path d="M42.6 42.2C43.6 40.3 45.3 39.9 47.1 39.9C49.6 39.9 51.3 41.5 51.3 43.6C51.3 45.6 50.1 47.0 48.3 48.9L42.6 54.8H53.0" stroke="#fff" stroke-width="2.8" fill="none" stroke-linejoin="miter"/></svg>
<div id="name" class="t S" style="left:99.50px;top:1531.00px;font-size:34px;color:#1c2b34;font-weight:400;letter-spacing:0px;">Name</div>
<svg class="a" style="left:207.0px;top:1536.0px" width="22" height="22" viewBox="0 0 22 22"><circle cx="11" cy="11" r="11" fill="#0b6cc8"/><path d="M7.0 8.2C7.4 6.1 9.1 5.0 11.2 5.0C13.6 5.0 15.2 6.5 15.2 8.4C15.2 10.9 11.7 11.0 11.4 13.0" stroke="#fff" stroke-width="3" fill="none" stroke-linecap="butt"/><rect x="9.6" y="14.7" width="3.6" height="2.9" fill="#fff"/></svg>
<div class="a" style="left:103px;top:1586px;width:1664px;height:50px;box-sizing:border-box;border:2px solid #d9dadb;border-radius:6px;background:#fff"></div>
<div id="ninput" class="t S" style="left:116.60px;top:1599.00px;font-size:25px;color:#1c2b34;font-weight:400;letter-spacing:0px;transform:scaleX(1.0173);transform-origin:0 0;">webstore.enterprise.error.count</div>
<div class="a" style="left:1433px;top:1655px;width:111px;height:51px;box-sizing:border-box;border:2px solid #d9dadb;border-radius:6px;background:#fff"></div>
<div id="cancel" class="t S" style="left:1452.90px;top:1669.00px;font-size:24.7px;color:#1c2b34;font-weight:400;letter-spacing:0px;transform:scaleX(0.9469);transform-origin:0 0;">Cancel</div>
<div class="a" style="left:1575px;top:1655px;width:188px;height:52px;background:#0b66c7;border-radius:6px"></div>
<div id="create" class="t S" style="left:1594.00px;top:1669.00px;font-size:24.7px;color:#ffffff;font-weight:400;letter-spacing:0px;">Create Metric</div>
</body></html>
